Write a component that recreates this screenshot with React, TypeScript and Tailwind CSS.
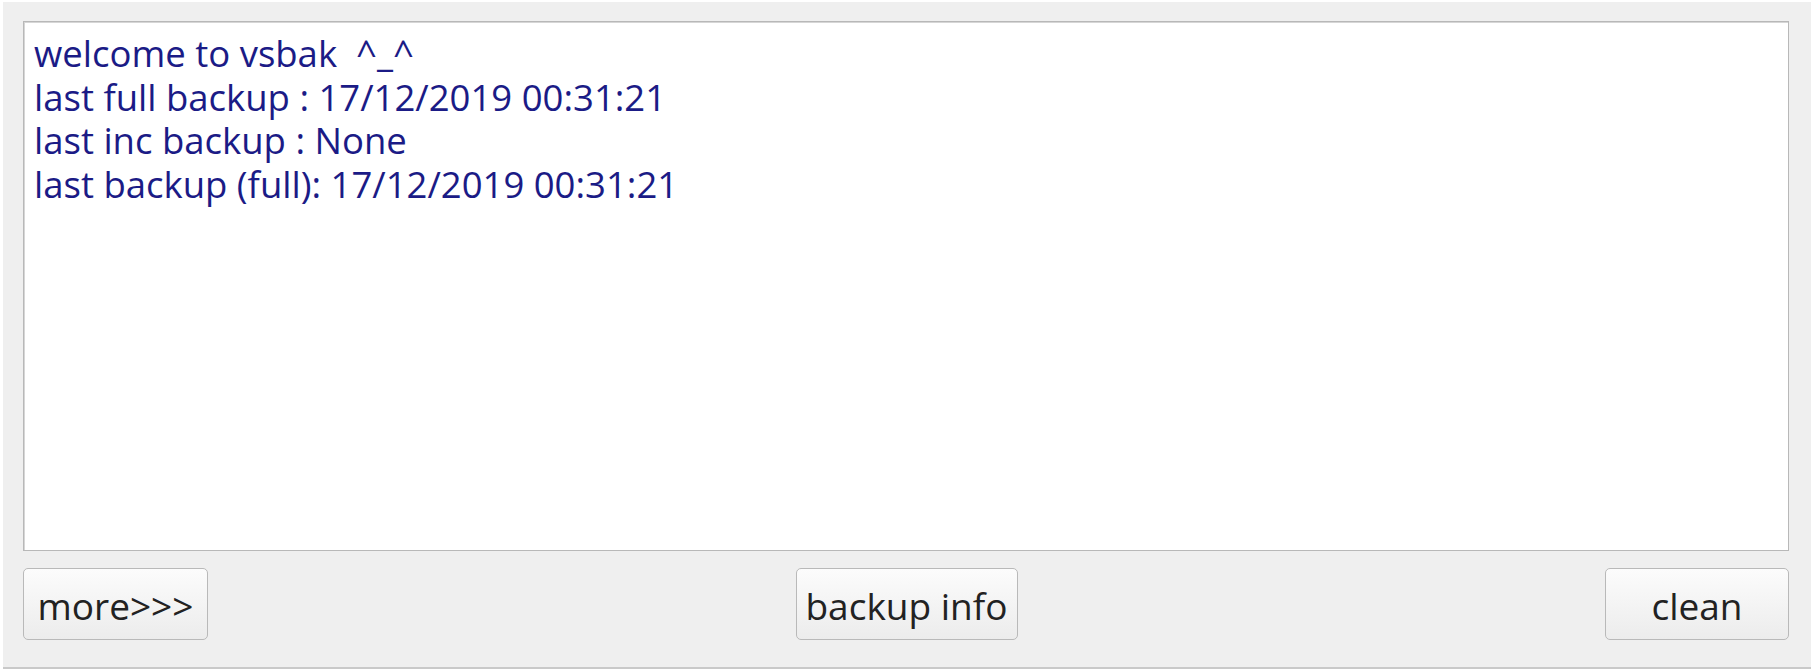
import React from "react";

const lines = [
  "welcome to vsbak  ^_^",
  "last full backup : 17/12/2019 00:31:21",
  "last inc backup : None",
  "last backup (full): 17/12/2019 00:31:21",
];

function Btn({ label, w }: { label: string; w: string }) {
  return (
    <button
      className={`${w} h-[72px] rounded-[5px] border border-[#b9b9b9] bg-gradient-to-b from-[#fcfcfc] to-[#ececec] text-[37px] leading-none text-[#222222] flex items-center justify-center pt-[3px]`}
      style={{ fontFamily: '"Open Sans", "Noto Sans", sans-serif' }}
    >
      {label}
    </button>
  );
}

export default function App() {
  return (
    <div className="w-[1814px] h-[672px] bg-white overflow-hidden">
      <div className="ml-[3px] mt-[2px] w-[1808px] h-[667px] bg-[#efefef] border-b-2 border-[#c9c9c9] pt-[19px] px-[20px]">
        <div
          className="h-[530px] w-[1766px] bg-white border border-[#b8b8b8] shadow-[inset_1px_1px_0_#d6d6d6] pl-[10px] pt-[10px] text-[36.5px] leading-[43.5px] text-[#1b1b86]"
          style={{ fontFamily: '"Open Sans", "Noto Sans", sans-serif' }}
        >
          {lines.map((l) => (
            <div key={l} className="whitespace-pre">
              {l}
            </div>
          ))}
        </div>
        <div className="mt-[17px] w-[1766px] flex justify-between">
          <Btn label="more>>>" w="w-[185px]" />
          <Btn label="backup info" w="w-[222px]" />
          <Btn label="clean" w="w-[184px]" />
        </div>
      </div>
    </div>
  );
}
